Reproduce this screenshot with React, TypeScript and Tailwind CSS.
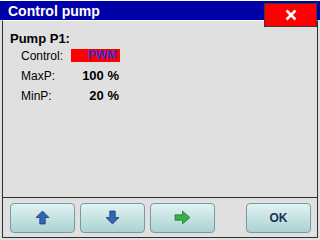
import React from "react";

const rows = [
  { label: "MaxP:", value: "100 %" },
  { label: "MinP:", value: "20 %" },
];

function Arrow({ dir, color }: { dir: "up" | "down" | "right"; color: string }) {
  const rot = dir === "up" ? 0 : dir === "down" ? 180 : 90;
  return (
    <svg width="15" height="15" viewBox="0 0 14 14" style={{ transform: `rotate(${rot}deg)` }}>
      <path d="M7 1 L13 7 L9.5 7 L9.5 13 L4.5 13 L4.5 7 L1 7 Z" fill={color} stroke="#1e3f78" strokeWidth="0.8" />
    </svg>
  );
}

function PanelButton({ children }: { children: React.ReactNode }) {
  return (
    <button className="h-[30px] w-[65px] rounded-[4px] border border-[#7c98a4] bg-gradient-to-b from-[#e2f2f2] to-[#a9d3d2] flex items-center justify-center">
      {children}
    </button>
  );
}

export default function App() {
  return (
    <div
      className="relative w-[320px] h-[240px] bg-[#e0e0e0] flex flex-col overflow-hidden"
      style={{ fontFamily: "'Liberation Sans', Arial, sans-serif" }}
    >
      {/* Title bar */}
      <div className="h-[20px] bg-[#0000a8] border-t border-white flex items-center pl-[8px]">
        <span className="text-white font-bold text-[14px] leading-none">Control pump</span>
      </div>
      <div className="absolute left-[264px] top-[3px] w-[53px] h-[24px] bg-[#ff0000] border border-[#3a3a3a] flex items-center justify-center">
        <svg width="12" height="12" viewBox="0 0 12 12">
          <path d="M1.5 1.5 L10.5 10.5 M10.5 1.5 L1.5 10.5" stroke="white" strokeWidth="2.6" />
        </svg>
      </div>

      {/* Body */}
      <div className="flex-1 mx-[2px] mb-[2px] border-l border-r border-b border-[#303030] border-t border-t-white flex flex-col">
        <div className="flex-1 pl-[7px] pt-[11px]">
          <div className="font-bold text-[13px] text-black leading-none">Pump P1:</div>
          <div className="pl-[11px] pt-[4px] flex flex-col gap-[7px] text-[12px] text-black">
            <div className="flex items-center h-[13px]">
              <span className="w-[50px]">Control:</span>
              <span className="w-[49px] h-[13px] bg-[#ff0000] text-[#3030d0] font-bold text-[12px] leading-[13px] text-right pr-[3px]">
                PWM
              </span>
            </div>
            {rows.map((r) => (
              <div key={r.label} className="flex items-center h-[13px]">
                <span className="w-[50px]">{r.label}</span>
                <span className="w-[48px] text-right font-bold text-[13px]">{r.value}</span>
              </div>
            ))}
          </div>
        </div>

        {/* Button bar */}
        <div className="border-t border-[#303030] h-[40px] flex items-center pl-[7px] pr-[6px]">
          <div className="flex gap-[5px]">
            <PanelButton>
              <Arrow dir="up" color="#2f66b8" />
            </PanelButton>
            <PanelButton>
              <Arrow dir="down" color="#2f66b8" />
            </PanelButton>
            <PanelButton>
              <svg width="17" height="15" viewBox="0 0 16 14">
                <path d="M1 4.5 L8 4.5 L8 1 L15 7 L8 13 L8 9.5 L1 9.5 Z" fill="#36b04a" stroke="#2a7a3a" strokeWidth="0.8" />
              </svg>
            </PanelButton>
          </div>
          <div className="ml-auto">
            <PanelButton>
              <span className="font-bold text-[12px] text-[#1e2e5a]">OK</span>
            </PanelButton>
          </div>
        </div>
      </div>
    </div>
  );
}
